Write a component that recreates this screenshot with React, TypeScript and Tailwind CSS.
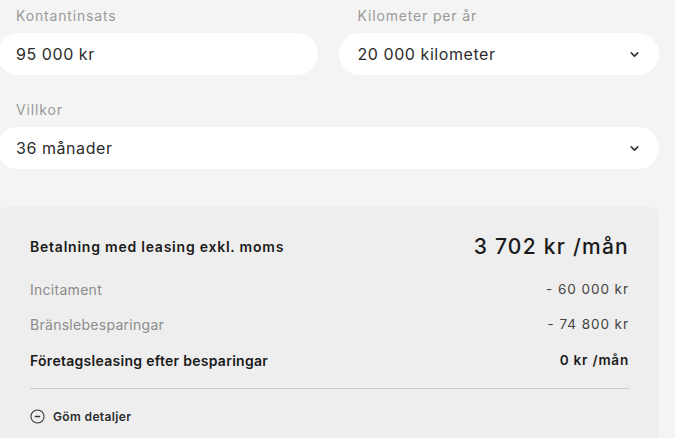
import { ChevronDown } from "lucide-react";

const fields = [
  { label: "Kontantinsats", value: "95 000 kr", select: false },
  { label: "Kilometer per år", value: "20 000 kilometer", select: true },
];

const details = [
  { label: "Incitament", value: "- 60 000 kr" },
  { label: "Bränslebesparingar", value: "- 74 800 kr" },
];

function Field({ label, value, select }: { label: string; value: string; select: boolean }) {
  return (
    <div className="flex flex-col">
      <label className="h-[33px] pl-[19px] pt-[5px] text-[14px] tracking-[0.06em] text-[#9a9a9a]">
        {label}
      </label>
      <div className="flex h-[42px] items-center justify-between rounded-full bg-white pl-[19px] pr-[18px] text-[16px] tracking-[0.035em] text-[#2b2b2b]">
        <span>{value}</span>
        {select && <ChevronDown className="h-[13px] w-[13px] text-[#333]" strokeWidth={3} />}
      </div>
    </div>
  );
}

export default function App() {
  return (
    <div
      className="h-[438px] w-[675px] overflow-hidden bg-[#f4f4f4]"
      style={{ fontFamily: 'Inter, "Open Sans", sans-serif' }}
    >
      <div className="-ml-[3px] w-[662px]">
        {/* INPUTS */}
        <div className="grid grid-cols-2 gap-x-[21px]">
          {fields.map((f) => (
            <Field key={f.label} {...f} />
          ))}
        </div>
        <div className="mt-[19px]">
          <Field label="Villkor" value="36 månader" select />
        </div>

        {/* SUMMARY */}
        <div className="mt-[38px] rounded-t-lg bg-[#eeeeee] pb-[32px] pl-[33px] pr-[30px] pt-[24px]">
          <div className="flex items-center justify-between">
            <span className="text-[14px] font-semibold tracking-[0.055em] text-[#1a1a1a]">
              Betalning med leasing exkl. moms
            </span>
            <span className="text-[21px] font-medium tracking-[0.06em] text-[#1a1a1a]">
              3 702 kr /mån
            </span>
          </div>

          <div className="mt-[9px] flex flex-col">
            {details.map((d) => (
              <div key={d.label} className="flex h-[35px] items-center justify-between">
                <span className="text-[14px] tracking-[0.02em] text-[#8c8c8c]">{d.label}</span>
                <span className="text-[13.5px] tracking-[0.07em] text-[#444]">{d.value}</span>
              </div>
            ))}
            <div className="flex h-[37px] items-center justify-between pt-[1px]">
              <span className="text-[14px] font-semibold tracking-[0.02em] text-[#1a1a1a]">
                Företagsleasing efter besparingar
              </span>
              <span className="text-[13.5px] font-semibold tracking-[0.06em] text-[#1a1a1a]">
                0 kr /mån
              </span>
            </div>
          </div>

          <div className="mt-[9px] h-px bg-[#c9c9c9]" />

          <button className="mt-[19px] flex items-center gap-[8px] text-[12px] font-semibold tracking-[0.03em] text-[#2b2b2b]">
            <svg width="15" height="15" viewBox="0 0 16 16" fill="none">
              <circle cx="8" cy="8" r="7" stroke="#333" strokeWidth="1.1" />
              <path d="M5.8 8h4.4" stroke="#333" strokeWidth="1.6" strokeLinecap="round" />
            </svg>
            Göm detaljer
          </button>
        </div>
      </div>
    </div>
  );
}
